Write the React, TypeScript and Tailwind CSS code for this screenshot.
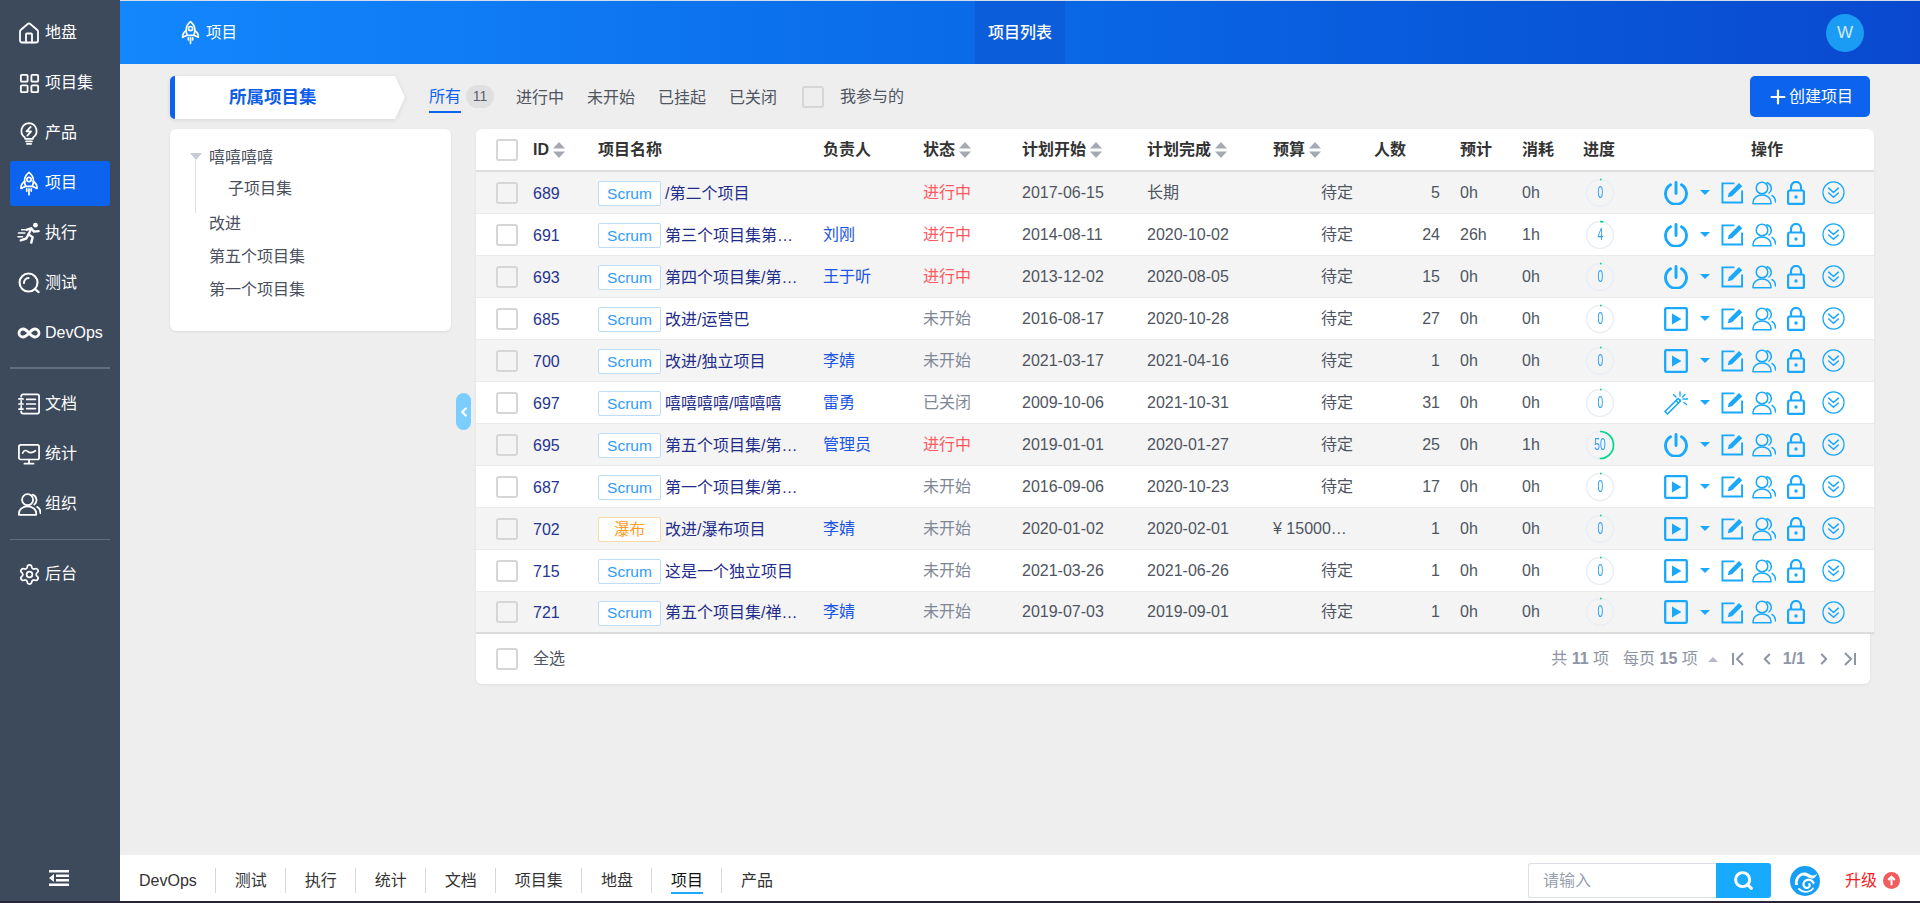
import React from "react";
import { House, LayoutGrid, Infinity as InfinityIcon, Settings, ChevronLeft, ChevronRight, Search, Plus } from "lucide-react";

const Rocket = ({ className = "" }: { className?: string }) => (
  <svg viewBox="0 0 24 28" className={className} fill="none" stroke="currentColor" strokeWidth="1.9" strokeLinejoin="round" strokeLinecap="round">
    <path d="M12 1.500c3.400 2.600 5 6 5 9.500 0 2.400-.5 4.200-1.400 6.200H8.400C7.500 15.200 7 13.400 7 11c0-3.500 1.600-6.900 5-9.500z" />
    <circle cx="12" cy="9.500" r="2.400" />
    <path d="M7.300 11.500C4.500 13.500 2.500 15.500 3 19.500l5-2.300M16.700 11.500c2.800 2 4.800 4 4.300 8l-5-2.300" />
    <path d="M12 20v6.500M9.500 20v2.500M14.500 20v2.500" />
  </svg>
);
const Bulb = ({ className = "" }: { className?: string }) => (
  <svg viewBox="0 0 24 28" className={className} fill="none" stroke="currentColor" strokeWidth="2.100" strokeLinecap="round" strokeLinejoin="round">
    <path d="M12 1.500a9.500 9.500 0 0 0-5 17.300l.5 1.700h9l.5-1.700a9.500 9.500 0 0 0-5-17.300z" />
    <path d="M14 6l-5 5.500h5.500L10 16.500" fill="none" strokeWidth="2.200" />
    <path d="M8.500 23.500h7M9.500 26.500h5" />
  </svg>
);
const RunIcon = ({ className = "" }: { className?: string }) => (
  <svg viewBox="0 0 26 24" className={className} fill="none" stroke="currentColor" strokeWidth="2.600" strokeLinecap="round" strokeLinejoin="round">
    <circle cx="20" cy="3.500" r="2.600" fill="currentColor" stroke="none" />
    <path d="M10 8.500l5.500-1.500 3 3.500 5-.5" />
    <path d="M15.500 7l-3 6.500 4.500 3-1.500 6" />
    <path d="M12.500 13.500l-2.500 4.500-6 2" />
    <path d="M5 8.500h3M1.500 12h7M1 16h5" strokeWidth="1.600" />
  </svg>
);
const TestIcon = ({ className = "" }: { className?: string }) => (
  <svg viewBox="0 0 24 24" className={className} fill="none" stroke="currentColor" strokeWidth="2.300" strokeLinecap="round">
    <circle cx="11.500" cy="11.500" r="9.800" />
    <path d="M6.500 12a5.500 5.500 0 0 1 5-5.500M18.500 18.500l4 3.500" />
  </svg>
);
const DocIcon = ({ className = "" }: { className?: string }) => (
  <svg viewBox="0 0 24 24" className={className} fill="none" stroke="currentColor" strokeWidth="1.900" strokeLinecap="round" strokeLinejoin="round">
    <path d="M3.500 4V3.500A2 2 0 0 1 5.500 1.500H21a2 2 0 0 1 2 2v17a2 2 0 0 1-2 2H5.500a2 2 0 0 1-2-2V20" />
    <path d="M3.500 8.500v2M3.500 14v2M1 6.500h4.500M1 12h4.500M1 17.500h4.500M9.500 7h9.500M9.500 12h9.500M9.500 17h9.500" />
  </svg>
);
const ChartIcon = ({ className = "" }: { className?: string }) => (
  <svg viewBox="0 0 24 24" className={className} fill="none" stroke="currentColor" strokeWidth="1.900" strokeLinecap="round" strokeLinejoin="round">
    <rect x="1" y="2" width="22" height="16" rx="2" />
    <path d="M5 11c2-4 4-3 6-1.500s4 2 8-1M12 18v3.500M7 22.500h10" />
  </svg>
);
const UsersIcon = ({ className = "", w = 1.9 }: { className?: string; w?: number }) => (
  <svg viewBox="0 0 24 24" className={className} fill="none" stroke="currentColor" strokeWidth={w} strokeLinecap="round" strokeLinejoin="round">
    <circle cx="10" cy="7" r="5.800" />
    <path d="M1 22.800v-1.300c0-4.500 4-7.500 9-7.500s9 3 9 7.500v1.300z" />
    <path d="M15 1.800a5.800 5.800 0 0 1 2 10.200M20 14.500c2.300 1.200 3.500 3.500 3.500 6.500" />
  </svg>
);
const CollapseIcon = ({ className = "" }: { className?: string }) => (
  <svg viewBox="0 0 20 16" className={className} fill="currentColor">
    <path d="M0 0h20v2.500H0zM7 4.500h13V7H7zM7 9h13v2.500H7zM0 13.500h20V16H0zM5 4v8L0 8z" />
  </svg>
);

const IC = "#1aa8fc";
const PowerI = () => (
  <svg viewBox="0 0 24 24" className="w-[24px] h-[24px]" fill="none" stroke={IC} strokeWidth="2.900" strokeLinecap="round">
    <path d="M12 1.500v11M6.500 3.800a10.500 10.500 0 1 0 11 0" />
  </svg>
);
const PlayI = () => (
  <svg viewBox="0 0 24 24" className="w-[24px] h-[24px]" fill="none" stroke={IC} strokeWidth="2.300" strokeLinejoin="round">
    <rect x="1.200" y="1.200" width="21.600" height="21.600" rx="1" />
    <path d="M8 6.500l9.500 5.500L8 17.500z" fill={IC} stroke="none" />
  </svg>
);
const WandI = () => (
  <svg viewBox="0 0 24 24" className="w-[24px] h-[24px]" fill="none" stroke={IC} strokeWidth="1.400" strokeLinecap="round">
    <path d="M1 20.500L14 7.500l2.500 2.500L3.500 23z" strokeLinejoin="round" strokeWidth="1.700" />
    <path d="M12 9.500l2.500 2.500" />
    <path d="M16 1v4M16 8.500v1.500M9.500 3.500l2.500 2.500M21 3.500L18.500 6M19 8h4.500M20 11.500l2.500 2" />
  </svg>
);
const EditI = () => (
  <svg viewBox="0 0 24 24" className="w-[23px] h-[23px]" fill="none" stroke={IC} strokeWidth="2">
    <path d="M14 2.500H1.500v20h20.500V10" />
    <path d="M7 17l1.200-4.300L18.800 2l3.400 3.400L11.500 15.800z" fill={IC} stroke="none" />
  </svg>
);
const LockI = () => (
  <svg viewBox="0 0 18 24" className="w-[18px] h-[24px]" fill="none" stroke={IC} strokeWidth="2.200" strokeLinejoin="round">
    <rect x="1.100" y="9.500" width="15.800" height="13.400" rx="1.500" />
    <path d="M4 9.500V6a5 5 0 0 1 10 0v3.500" />
    <circle cx="9" cy="16" r="1.700" fill={IC} stroke="none" />
  </svg>
);
const ExpandI = () => (
  <svg viewBox="0 0 24 24" className="w-[23px] h-[23px]" fill="none" stroke={IC} strokeWidth="1.300" strokeLinecap="round" strokeLinejoin="round">
    <circle cx="12" cy="12" r="11" />
    <path d="M7 7.500l5 4.500 5-4.500M7 12.500l5 4.500 5-4.500" strokeWidth="1.600" />
  </svg>
);

const Sort = () => (
  <svg viewBox="0 0 12 16" className="w-[12px] h-[16px] ml-[4px] shrink-0" fill="#a4a9b4">
    <path d="M6 0l6 6.500H0zM6 16l6-6.500H0z" />
  </svg>
);

const Check = () => (
  <span className="block w-[22px] h-[22px] rounded-[3px] border-2 border-[#d6d6d6] bg-transparent" />
);

const Progress = ({ v }: { v: number }) => {
  const r = 13.500;
  const c = 2 * Math.PI * r;
  const len = v === 0 ? 1.600 : (v / 100) * c;
  return (
    <div className="relative w-[30px] h-[30px] flex items-center justify-center">
      <svg viewBox="0 0 30 30" className="absolute inset-0 w-[30px] h-[30px] -rotate-90">
        <circle cx="15" cy="15" r={r} fill="none" stroke="#e9eef5" strokeWidth="1.500" />
        <circle cx="15" cy="15" r={r} fill="none" stroke="#00d68f" strokeWidth="1.700" strokeDasharray={`${len} ${c}`} />
      </svg>
      <span className="relative text-[16px] leading-none text-[#2a9df4] scale-x-[.64]">{v}</span>
    </div>
  );
};

const grid = "grid grid-cols-[57px_65px_225px_100px_99px_125px_126px_80px_87px_82px_61px_81px_210px] items-center";

type Row = { id: number; tag?: string; name: string; owner: string; status: string; start: string; end: string; budget?: string; n: number; est: string; used: string; pr: number; op: "power" | "play" | "wand" };
const rows: Row[] = [
  { id: 689, name: "/第二个项目", owner: "", status: "进行中", start: "2017-06-15", end: "长期", n: 5, est: "0h", used: "0h", pr: 0, op: "power" },
  { id: 691, name: "第三个项目集第…", owner: "刘刚", status: "进行中", start: "2014-08-11", end: "2020-10-02", n: 24, est: "26h", used: "1h", pr: 4, op: "power" },
  { id: 693, name: "第四个项目集/第…", owner: "王于听", status: "进行中", start: "2013-12-02", end: "2020-08-05", n: 15, est: "0h", used: "0h", pr: 0, op: "power" },
  { id: 685, name: "改进/运营巴", owner: "", status: "未开始", start: "2016-08-17", end: "2020-10-28", n: 27, est: "0h", used: "0h", pr: 0, op: "play" },
  { id: 700, name: "改进/独立项目", owner: "李婧", status: "未开始", start: "2021-03-17", end: "2021-04-16", n: 1, est: "0h", used: "0h", pr: 0, op: "play" },
  { id: 697, name: "嘻嘻嘻嘻/嘻嘻嘻", owner: "雷勇", status: "已关闭", start: "2009-10-06", end: "2021-10-31", n: 31, est: "0h", used: "0h", pr: 0, op: "wand" },
  { id: 695, name: "第五个项目集/第…", owner: "管理员", status: "进行中", start: "2019-01-01", end: "2020-01-27", n: 25, est: "0h", used: "1h", pr: 50, op: "power" },
  { id: 687, name: "第一个项目集/第…", owner: "", status: "未开始", start: "2016-09-06", end: "2020-10-23", n: 17, est: "0h", used: "0h", pr: 0, op: "play" },
  { id: 702, tag: "瀑布", name: "改进/瀑布项目", owner: "李婧", status: "未开始", start: "2020-01-02", end: "2020-02-01", budget: "¥ 15000…", n: 1, est: "0h", used: "0h", pr: 0, op: "play" },
  { id: 715, name: "这是一个独立项目", owner: "", status: "未开始", start: "2021-03-26", end: "2021-06-26", n: 1, est: "0h", used: "0h", pr: 0, op: "play" },
  { id: 721, name: "第五个项目集/禅…", owner: "李婧", status: "未开始", start: "2019-07-03", end: "2019-09-01", n: 1, est: "0h", used: "0h", pr: 0, op: "play" },
];

const SideItem = ({ icon, label, active }: { icon: React.ReactNode; label: string; active?: boolean }) => (
  <div className="h-[50px] flex items-center mx-[10px]">
    <div className={`w-full h-[45px] flex items-center pl-[7px] rounded-[3px] text-white ${active ? "bg-[#0c64ee]" : ""}`}>
      <span className="w-[24px] h-[26px] flex items-center justify-center shrink-0">{icon}</span>
      <span className="ml-[4px] text-[16px] leading-none">{label}</span>
    </div>
  </div>
);

const bottomTabs = ["DevOps", "测试", "执行", "统计", "文档", "项目集", "地盘", "项目", "产品"];

export default function App() {
  return (
    <div className="relative flex w-[1920px] h-[903px] overflow-hidden bg-[#eeeeee] font-['Liberation_Sans','Noto_Sans_CJK_SC',sans-serif] text-[16px] text-[#4f5560]">
      {/* sidebar */}
      <aside className="w-[120px] shrink-0 bg-[#3c4a5c] flex flex-col pt-[8px]">
        <SideItem label="地盘" icon={<House className="w-[25px] h-[25px]" strokeWidth={1.800} />} />
        <SideItem label="项目集" icon={<LayoutGrid className="w-[23px] h-[23px]" strokeWidth={1.900} />} />
        <SideItem label="产品" icon={<Bulb className="w-[20px] h-[25px]" />} />
        <SideItem label="项目" active icon={<Rocket className="w-[22px] h-[25px]" />} />
        <SideItem label="执行" icon={<RunIcon className="w-[24px] h-[22px]" />} />
        <SideItem label="测试" icon={<TestIcon className="w-[22px] h-[22px]" />} />
        <SideItem label="DevOps" icon={<InfinityIcon className="w-[24px] h-[24px]" strokeWidth={2.800} />} />
        <div className="mx-[10px] mt-[9px] h-[2px] bg-[#616d7c] shrink-0" />
        <div className="mt-[10px]" />
        <SideItem label="文档" icon={<DocIcon className="w-[22px] h-[22px]" />} />
        <SideItem label="统计" icon={<ChartIcon className="w-[22px] h-[22px]" />} />
        <SideItem label="组织" icon={<UsersIcon className="w-[23px] h-[23px]" />} />
        <div className="mx-[10px] mt-[10px] h-px bg-[#616d7c] shrink-0" />
        <div className="mt-[9px]" />
        <SideItem label="后台" icon={<Settings className="w-[23px] h-[23px]" strokeWidth={1.800} />} />
        <div className="mt-auto mb-[17px] ml-[49px] text-white">
          <CollapseIcon className="w-[20px] h-[16px]" />
        </div>
      </aside>

      <div className="flex-1 min-w-0 flex flex-col">
        {/* header */}
        <header className="relative h-[64px] shrink-0 bg-gradient-to-r from-[#1487fd] to-[#0a49cf] border-t border-[#d5dde8] flex items-center text-white">
          <Rocket className="ml-[60px] w-[21px] h-[25px]" />
          <span className="ml-[5px] text-[15.500px]">项目</span>
          <div className="ml-[738px] w-[90px] h-full bg-[#0c5dda] flex items-center justify-center font-medium text-[16px]">项目列表</div>
          <div className="ml-auto mr-[56px] w-[38px] h-[38px] rounded-full bg-[#1a9cf5] flex items-center justify-center text-[#d5e8fc] text-[17px]">W</div>
        </header>

        {/* content */}
        <main className="flex-1 min-h-0 pt-[12px] pl-[50px] pr-[50px]">
          <div className="flex items-start h-[43px]">
            <div className="relative w-[235px] h-[43px]">
              <svg viewBox="0 0 235 43" className="absolute inset-0 w-[235px] h-[43px] drop-shadow-[0_1px_2px_rgba(0,0,0,0.1)]">
                <path d="M5 0H225L235 21.500L225 43H5z" fill="#ffffff" />
                <path d="M5 0a5 5 0 0 0-5 5v33a5 5 0 0 0 5 5z" fill="#0c64ee" />
              </svg>
              <span className="absolute left-[59px] top-0 h-[43px] flex items-center text-[#0d5ee8] font-bold text-[17.500px]">所属项目集</span>
            </div>
            <div className="ml-[24px] relative h-[36px] flex items-center text-[#0c64ee] pt-[5px]">
              <span>所有</span>
              <span className="absolute left-0 right-0 bottom-[-1px] h-[2px] bg-[#0c64ee]" />
            </div>
            <span className="ml-[5px] mt-[9px] w-[28px] h-[23px] rounded-full bg-[#e0e0e0] text-[#5a5f6b] text-[14px] flex items-center justify-center">11</span>
            <span className="ml-[22px] mt-[10px]">进行中</span>
            <span className="ml-[23px] mt-[10px]">未开始</span>
            <span className="ml-[23px] mt-[10px]">已挂起</span>
            <span className="ml-[23px] mt-[10px]">已关闭</span>
            <span className="ml-[25px] mt-[10px]"><Check /></span>
            <span className="ml-[16px] mt-[9px]">我参与的</span>
            <button className="ml-auto w-[120px] h-[41px] bg-[#0c64ee] rounded-[5px] text-white flex items-center justify-center">
              <Plus className="w-[22px] h-[22px]" strokeWidth={2.400} />
              创建项目
            </button>
          </div>

          <div className="flex items-start mt-[10px]">
            {/* tree */}
            <div className="w-[281px] h-[202px] bg-white rounded-[6px] shadow-[0_1px_3px_rgba(0,0,0,0.08)] pt-[17px] pl-[20px] text-[#4a5060] relative shrink-0">
              <div className="flex items-center h-[24px]">
                <svg viewBox="0 0 12 7" className="w-[12px] h-[7px] -mt-[3px]"><path d="M0 0h12L6 7z" fill="#c5cbd8" /></svg>
                <span className="ml-[7px]">嘻嘻嘻嘻</span>
              </div>
              <div className="ml-[5px] -mt-[10px] border-l border-[#dcdfe6] h-[53px] pl-[32px] pt-[17px] leading-[24px]">子项目集</div>
              <div className="pl-[19px] -mt-[6px] leading-[33px]">改进</div>
              <div className="pl-[19px] leading-[33px]">第五个项目集</div>
              <div className="pl-[19px] leading-[33px]">第一个项目集</div>
            </div>

            <div className="ml-[5px] mt-[264px] w-[15px] h-[37px] rounded-full bg-[#7acdff] flex items-center justify-center text-white shrink-0">
              <ChevronLeft className="w-[14px] h-[14px]" strokeWidth={4} />
            </div>
            <div className="w-[5px] shrink-0" />

            {/* table */}
            <div className="w-[1398px] shrink-0">
              <div className="rounded-t-[6px] overflow-hidden bg-white shadow-[0_1px_3px_rgba(0,0,0,0.06)]">
                <div className={`${grid} h-[43px] border-b-2 border-[#dddddd] font-bold text-[#333333]`}>
                  <div className="pl-[20px]"><Check /></div>
                  <div className="flex items-center">ID<Sort /></div>
                  <div>项目名称</div>
                  <div>负责人</div>
                  <div className="flex items-center">状态<Sort /></div>
                  <div className="flex items-center">计划开始<Sort /></div>
                  <div className="flex items-center">计划完成<Sort /></div>
                  <div className="flex items-center">预算<Sort /></div>
                  <div className="pl-[21px]">人数</div>
                  <div className="pl-[20px]">预计</div>
                  <div>消耗</div>
                  <div>进度</div>
                  <div className="pl-[87px]">操作</div>
                </div>
                {rows.map((r, i) => (
                  <div key={r.id} className={`${grid} h-[42px] ${i === rows.length - 1 ? "border-b-2 border-[#dddddd]" : "border-b border-[#ebebeb]"} ${i % 2 === 0 ? "bg-[#f4f4f5]" : "bg-white"}`}>
                    <div className="pl-[20px]"><Check /></div>
                    <div className="pt-[2px] text-[#26358f]">{r.id}</div>
                    <div className="flex items-center pt-[2px]">
                      {r.tag ? (
                        <span className="w-[63px] h-[25px] rounded-[2px] border border-[#fcd9a8] bg-white text-[#ff9b1e] text-[15.500px] flex items-center justify-center shrink-0">{r.tag}</span>
                      ) : (
                        <span className="w-[63px] h-[25px] rounded-[2px] border border-[#bcdcf8] bg-white text-[#2f9bff] text-[15.500px] flex items-center justify-center shrink-0">Scrum</span>
                      )}
                      <span className="ml-[4px] whitespace-nowrap text-[#1f2d8a]">{r.name}</span>
                    </div>
                    <div className="text-[#1b55e2]">{r.owner}</div>
                    <div className={r.status === "进行中" ? "text-[#ff5a5f]" : "text-[#7f8797]"}>{r.status}</div>
                    <div>{r.start}</div>
                    <div>{r.end}</div>
                    {r.budget ? <div className="whitespace-nowrap">{r.budget}</div> : <div className="text-right">待定</div>}
                    <div className="text-right">{r.n}</div>
                    <div className="pl-[20px]">{r.est}</div>
                    <div>{r.used}</div>
                    <div className="pl-[2px]"><Progress v={r.pr} /></div>
                    <div className="flex items-center">
                      {r.op === "power" ? <PowerI /> : r.op === "play" ? <PlayI /> : <WandI />}
                      <svg viewBox="0 0 10 5" className="ml-[12px] w-[10px] h-[5px]"><path d="M0 0h10L5 5z" fill={IC} /></svg>
                      <span className="ml-[11px]"><EditI /></span>
                      <span className="ml-[8px]"><UsersIcon className="w-[24px] h-[24px] text-[#1aa8fc]" w={1.500} /></span>
                      <span className="ml-[11px]"><LockI /></span>
                      <span className="ml-[17px]"><ExpandI /></span>
                    </div>
                  </div>
                ))}
              </div>
              <div className="w-[1394px] h-[50px] bg-white rounded-b-[6px] shadow-[0_1px_3px_rgba(0,0,0,0.06)] flex items-center pl-[20px] pr-[13px]">
                <Check />
                <span className="ml-[15px]">全选</span>
                <div className="ml-auto flex items-center text-[#8e95a5]">
                  <span>共 <b>11</b> 项</span>
                  <span className="ml-[14px]">每页 <b>15</b> 项</span>
                  <svg viewBox="0 0 10 5" className="ml-[10px] w-[10px] h-[5px]"><path d="M0 5h10L5 0z" fill="#b5bac4" /></svg>
                  <svg viewBox="0 0 14 14" className="ml-[13px] w-[14px] h-[14px]" fill="none" stroke="#8e95a5" strokeWidth="2"><path d="M2 1v12M12 1L6 7l6 6" /></svg>
                  <ChevronLeft className="ml-[13px] w-[18px] h-[18px]" strokeWidth={2.800} />
                  <b className="ml-[7px]">1/1</b>
                  <ChevronRight className="ml-[10px] w-[18px] h-[18px]" strokeWidth={2.800} />
                  <svg viewBox="0 0 14 14" className="ml-[10px] w-[14px] h-[14px]" fill="none" stroke="#8e95a5" strokeWidth="2"><path d="M12 1v12M2 1l6 6-6 6" /></svg>
                </div>
              </div>
            </div>
          </div>
        </main>

        {/* bottom bar */}
        <footer className="h-[46px] mb-[2px] pt-[5px] shrink-0 bg-white flex items-center text-[#333333]">
          {bottomTabs.map((t, i) => (
            <div key={t} className={`relative h-[25px] pl-[19px] pr-[18px] flex items-center ${i < bottomTabs.length - 1 ? "border-r border-[#d8d8d8]" : ""} ${t === "项目" ? "text-[#111111]" : ""}`}>
              {t}
              {t === "项目" && <span className="absolute left-[19px] right-[18px] bottom-[-1px] h-[2px] bg-[#1aa8fc]" />}
            </div>
          ))}
          <div className="ml-auto flex items-center mr-[20px]">
            <div className="w-[188px] h-[35px] border border-[#dcdfe6] border-r-0 rounded-l-[3px] flex items-center pl-[14px] text-[#9a9fb0]">请输入</div>
            <div className="w-[55px] h-[35px] bg-[#18aaff] rounded-r-[3px] flex items-center justify-center text-white">
              <Search className="w-[21px] h-[21px]" strokeWidth={3.400} />
            </div>
            <svg viewBox="0 0 30 30" className="ml-[19px] w-[30px] h-[30px]">
              <circle cx="15" cy="15" r="15" fill="#189ff5" />
              <path d="M5 19c-1-7 4-13 10-12.500 4 .5 5 3 8 3 2 0 3-1 4-2-.5 3-3 5.500-6 5-3-.5-4.500-3.500-8-3C9.500 10 7 14 8 19z" fill="#ffffff" />
              <path d="M23.500 17c-1-2.500-3.500-3.500-6-3.200-2.500.4-4.300 2.700-4 5 .3 2.400 2.600 3.700 4.500 3 1.700-.6 2.300-2.400 1.300-3.600" fill="none" stroke="#ffffff" strokeWidth="2.200" strokeLinecap="round" />
              <path d="M9 23c2.500 2.500 6 3.500 9.500 2.500 2-.6 3.500-1.700 4.500-3" fill="none" stroke="#ffffff" strokeWidth="1.800" strokeLinecap="round" />
            </svg>
            <span className="ml-[25px] text-[#f22222]">升级</span>
            <svg viewBox="0 0 18 18" className="ml-[6px] w-[17px] h-[17px]">
              <circle cx="9" cy="9" r="9" fill="#f25b5b" />
              <path d="M9 14V5M5.500 8.500L9 5l3.500 3.500" fill="none" stroke="#fff" strokeWidth="2.200" />
            </svg>
          </div>
        </footer>
      </div>
      <div className="absolute left-0 right-0 bottom-0 h-[2px] bg-[#2a2438]" />
    </div>
  );
}
